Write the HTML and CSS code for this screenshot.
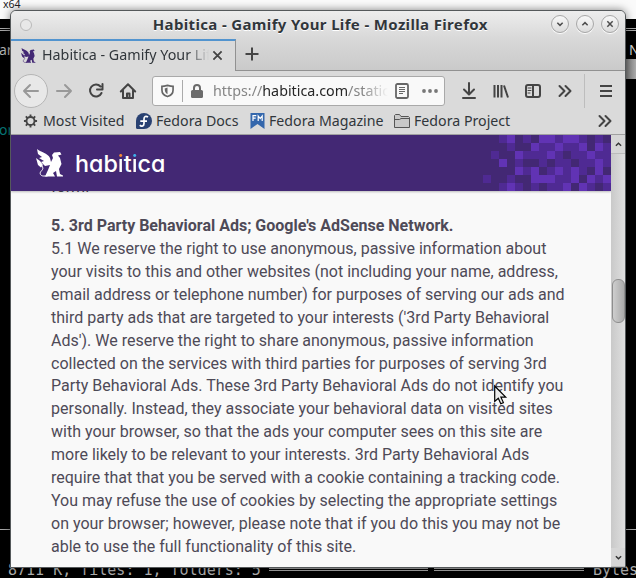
FILE: index.html
```
<!DOCTYPE html>
<html lang="en">
<head>
<meta charset="utf-8">
<title>Habitica - Gamify Your Life</title>
<link rel="stylesheet" href="styles.css">
</head>
<body>
<div class="desktop">
  <div class="host">x64</div>
  <div class="terminal">
    <span class="term t-name">ar</span><span class="term t-n">N</span><span class="term t-or">or</span>
    <i class="rule r-top"></i><i class="rule r-mid"></i><i class="rule r-bot-a"></i><i class="rule r-bot-b"></i>
    <i class="side"></i>
    <span class="term t-files">8711 K, files: 1, folders: 5</span><span class="term t-bytes">Bytes</span>
  </div>
  <main class="window">
    <header class="titlebar">
      <i class="dot"></i>
      <h1>Habitica - Gamify Your Life - Mozilla Firefox</h1>
      <div class="controls">
        <button><svg viewBox="0 0 18 18"><path d="M6 7.5l3 3 3-3"/></svg></button>
        <button><svg viewBox="0 0 18 18"><path d="M6 10.5l3-3 3 3"/></svg></button>
        <button><svg viewBox="0 0 18 18"><path d="M6 6l6 6M12 6l-6 6"/></svg></button>
      </div>
    </header>
    <div class="tabs">
      <div class="tab">
        <svg class="favicon" viewBox="0 0 28 28"><use href="#gryphon"/></svg>
        <span class="tabtitle">Habitica - Gamify Your Life</span>
        <svg class="close" viewBox="0 0 12 12"><path d="M1.5 1.5l9 9M10.500 1.500l-9 9"/></svg>
      </div>
      <svg class="plus" viewBox="0 0 14 14"><path d="M7 .5v13M.5 7h13"/></svg>
    </div>
    <nav class="toolbar">
      <span class="back"><svg class="ic" viewBox="0 0 16 16"><path d="M15 8H1M7 2L1 8l6 6"/></svg></span>
      <svg class="ic fwd" viewBox="0 0 16 16"><path d="M1 8h14M9 2l6 6-6 6"/></svg>
      <svg class="ic reload" viewBox="0 0 16 16"><path d="M12.500 3.500A6 6 0 1 0 13.500 10M14.500 1v5.500H9"/></svg>
      <svg class="ic home" viewBox="0 0 16 16"><path d="M.8 8.500L8 1.300l7.200 7.200M3 7.500V15h10V7.500M7 15v-4.500h2.500V15"/></svg>
      <div class="url">
        <svg class="shield" viewBox="0 0 14 14"><path d="M7 1C5 1.500 3 2 1 2v4c0 4 2.500 6 6 7 3.500-1 6-3 6-7V2C11 2 9 1.500 7 1z"/><path class="fill" d="M7 3.300L4 4.300c0 3 .8 5 3 6.200z"/></svg>
        <i class="split"></i>
        <svg class="lock" viewBox="0 0 12 14"><rect y="6" width="12" height="8" rx="1.500"/><path d="M3 7V4a3 3 0 0 1 6 0v3"/></svg>
        <span class="address">https://<b>habitica.com</b>/static/terms</span>
        <svg class="reader" viewBox="0 0 14 16"><rect x="1" y="1" width="12" height="14" rx="1.500"/><path d="M4 4.500h6M4 6.500h6M4 8.500h6M4 10.500h4"/></svg>
        <svg class="dots" viewBox="0 0 16 4"><circle cx="2" cy="2" r="1.900"/><circle cx="8" cy="2" r="1.900"/><circle cx="14" cy="2" r="1.900"/></svg>
      </div>
      <svg class="ic down" viewBox="0 0 16 16"><path d="M8 0v11M3 6.500l5 5 5-5M2 15h12"/></svg>
      <svg class="ic library" viewBox="0 0 16 16"><path d="M1.500 2v12.500M5 2v12.500M8.500 2v12.500M11 2.500l4 12"/></svg>
      <svg class="ic sidebar" viewBox="0 0 16 16"><rect x="1" y="2" width="14" height="12" rx="2"/><path d="M8 2v12"/><path class="thin" d="M3 5h3M3 7.500h3M3 10h2"/></svg>
      <svg class="ic more" viewBox="0 0 16 16"><path d="M2.500 3L7.500 8l-5 5M8.500 3l5 5-5 5"/></svg>
      <i class="vline"></i>
      <svg class="ic menu" viewBox="0 0 16 16"><path d="M2 3h12M2 8h12M2 13h12"/></svg>
    </nav>
    <div class="bookmarks">
      <svg class="bi gear" viewBox="0 0 16 16"><circle cx="8" cy="8" r="4.300"/><path d="M8 1v3M8 12v3M1 8h3M12 8h3M3 3l2.200 2.200M10.800 10.800L13 13M13 3l-2.200 2.200M5.200 10.800L3 13"/></svg>
      <span class="b1">Most Visited</span>
      <svg class="bi fedora" viewBox="0 0 16 16"><path fill="#294172" d="M0 8a8 8 0 1 1 8 8H1.500A1.500 1.500 0 0 1 0 14.500z"/><path fill="none" stroke="#fff" stroke-width="1.700" d="M12 4.200C10 2.500 8 3.500 8 6v4.500c0 2.500-2.500 3.500-4.200 1.700M4.300 8.200H11"/></svg>
      <span class="b2">Fedora Docs</span>
      <svg class="bi fm" viewBox="0 0 14 16"><path fill="#3467ac" d="M0 0h14v16l-7-5-7 5z"/><path fill="none" stroke="#fff" stroke-width="1.200" d="M2.500 8V2.600h3.300M2.500 5.200h2.700M7.700 8V3l2 2.500 2-2.500v5"/></svg>
      <span class="b3">Fedora Magazine</span>
      <svg class="bi folder" viewBox="0 0 16 16"><path d="M.5 14.500V2.500l1-1h4l1.500 2h7.500l1 1v10zM.5 6.500h5l1.500-1h8.500"/></svg>
      <span class="b4">Fedora Project</span>
      <svg class="ic bmore" viewBox="0 0 16 16"><path d="M2.500 3L7.500 8l-5 5M8.500 3l5 5-5 5"/></svg>
    </div>
    <section class="view">
      <div class="page">
        <div class="brandbar">
          <svg class="logo" viewBox="0 0 28 28"><g id="gryphon"><path d="M1 0C4 3 12 4 14 9l1 4 2-4-1-3 2-2.500 6-.5 1.500 2.500-3.500 1L24 9l1.500 6-2.500 5 1 5 3 1.500v1h-6L20 22l-3 2 2 3.500H9l3-6.500 2-5-5 1-4-4 3-1-5-3 3-1-4-3z"/><path d="M0 9l4 3 3 4-2 2.500L2 16z"/><path fill="none" stroke="currentColor" stroke-width="1" d="M6 17c2 3 0 4-1.500 6-1 2 .5 4 3 4h4"/></g></svg>
          <div class="word">hab<span class="io">i</span>t<span class="ib">i</span>ca</div>
          <svg class="pixels" viewBox="0 0 16 7" shape-rendering="crispEdges">
            <path fill="#4f2a93" d="M2 0h1v1h-1zM5 0h1v1h-1zM9 0h1v1h-1zM12 0h1v1h-1zM14 0h1v1h-1zM3 1h1v1h-1zM7 1h2v1h-2zM10 1h2v1h-2zM15 1h1v1h-1zM1 2h1v1h-1zM5 2h3v1h-3zM9 2h1v1h-1zM11 2h2v1h-2zM14 2h2v1h-2zM4 3h1v1h-1zM7 3h1v1h-1zM9 3h2v1h-2zM12 3h2v1h-2zM15 3h1v1h-1zM5 4h1v1h-1zM8 4h1v1h-1zM10 4h1v1h-1zM12 4h1v1h-1zM0 5h1v1h-1zM3 5h1v1h-1zM9 5h2v1h-2zM14 5h1v1h-1zM2 6h1v1h-1zM4 6h1v1h-1zM6 6h1v1h-1zM8 6h2v1h-2zM13 6h1v1h-1zM15 6h1v1h-1z"/>
            <path fill="#6133b4" d="M3 0h1v1h-1zM7 0h2v1h-2zM10 0h2v1h-2zM6 1h1v1h-1zM9 1h1v1h-1zM12 1h1v1h-1zM14 1h1v1h-1zM4 2h1v1h-1zM8 2h1v1h-1zM13 2h1v1h-1zM2 3h1v1h-1zM14 3h1v1h-1zM4 4h1v1h-1zM6 4h1v1h-1zM9 4h1v1h-1zM11 4h1v1h-1zM14 4h1v1h-1zM6 5h3v1h-3zM11 5h1v1h-1zM13 5h1v1h-1zM15 5h1v1h-1zM3 6h1v1h-1zM10 6h1v1h-1zM12 6h1v1h-1z"/>
          </svg>
        </div>
        <article>
          <p class="prev">form.</p>
          <p><strong>5. 3rd Party Behavioral Ads; Google's AdSense Network.</strong><br>
          5.1 We reserve the right to use anonymous, passive information about<br>
          your visits to this and other websites (not including your name, address,<br>
          email address or telephone number) for purposes of serving our ads and<br>
          third party ads that are targeted to your interests ('3rd Party Behavioral<br>
          Ads'). We reserve the right to share anonymous, passive information<br>
          collected on the services with third parties for purposes of serving 3rd<br>
          Party Behavioral Ads. These 3rd Party Behavioral Ads do not identify you<br>
          personally. Instead, they associate your behavioral data on visited sites<br>
          with your browser, so that the ads your computer sees on this site are<br>
          more likely to be relevant to your interests. 3rd Party Behavioral Ads<br>
          require that that you be served with a cookie containing a tracking code.<br>
          You may refuse the use of cookies by selecting the appropriate settings<br>
          on your browser; however, please note that if you do this you may not be<br>
          able to use the full functionality of this site.</p>
        </article>
      </div>
      <div class="scrollbar">
        <span class="sb"><svg viewBox="0 0 8 5"><path d="M1 4l3-3 3 3"/></svg></span>
        <span class="track"><i class="thumb"></i></span>
        <span class="sb"><svg viewBox="0 0 8 5"><path d="M1 1l3 3 3-3"/></svg></span>
      </div>
    </section>
  </main>
  <svg class="cursor" viewBox="0 0 13 20"><path d="M.7 1v15.500l3.600-3.300 2.500 5.600 2.600-1.200-2.500-5.400h4.800z"/></svg>
</div>
</body>
</html>
```
FILE: styles.css
```
* { box-sizing: border-box; }
body { margin: 0; }
svg { display: block; flex: none; overflow: visible; }
i { display: block; flex: none; }
.desktop { position: relative; width: 636px; height: 578px; overflow: hidden; background: #fafafa; font-family: "Noto Sans", sans-serif; color: #31363b; }
.host { position: absolute; left: 3px; top: -3px; font-size: 10.5px; line-height: 15px; color: #222; }
.terminal { position: absolute; inset: 19px 0 0; background: #000; }
.term { position: absolute; font: 16px/20px "DejaVu Sans Mono", monospace; color: #b2b2b2; white-space: pre; }
.t-name { left: -1px; top: 21px; font: 14px/20px "Noto Sans", sans-serif; }
.t-n { left: 629px; top: 21px; font: 14px/20px "Noto Sans", sans-serif; color: #d0d0d0; }
.t-or { left: -1px; top: 101px; font: 14px/20px "Noto Sans", sans-serif; color: #087878; }
.t-files { left: 8px; top: 541px; font-size: 15px; }
.t-bytes { left: 593px; top: 541px; font-size: 15px; }
.rule { position: absolute; height: 3px; border: solid #a8a8a8; border-width: 1px 0; }
.r-top { left: 0; right: 0; top: 9px; }
.r-mid { left: 0; right: 0; top: 510px; height: 1px; border-width: 1px 0 0; }
.r-bot-a { left: 269px; width: 159px; top: 549px; }
.r-bot-b { left: 434px; width: 150px; top: 549px; }
.side { position: absolute; right: 0; top: 40px; width: 11px; height: 20px; background: linear-gradient(90deg, #777, #aaa); }
.window { position: absolute; left: 10px; top: 10px; width: 616px; height: 558px; border: 1px solid #55595b; border-radius: 6px 6px 0 0; background: #dadada; box-shadow: 0 0 9px rgba(0,0,0,.5); overflow: hidden; display: flex; flex-direction: column; }
.titlebar { height: 28px; display: flex; align-items: center; background: linear-gradient(#ededed, #d8d8d8); position: relative; padding: 0 6.5px 2px 9px; }
.titlebar h1 { margin: 0 auto; font-size: 15px; line-height: 20px; letter-spacing: .35px; padding-left: 58px; white-space: nowrap; text-shadow: 0 1px #fff; }
.dot { width: 12px; height: 12px; border-radius: 50%; border: 1px solid #b9b9b9; background: #e8e8e8; margin-top: 2px; }
.controls { display: flex; gap: 7px; }
.controls button { width: 18px; height: 18px; padding: 0; border: 1px solid #a6a6a6; border-radius: 50%; background: linear-gradient(#f8f8f8, #dcdcdc); box-shadow: 0 1px 1px #fff; }
.controls svg { width: 16px; height: 16px; fill: none; stroke: #4d4d4d; stroke-width: 1.7; }
.tabs { height: 32px; display: flex; background: linear-gradient(#d8d8d8, #cacaca); border-bottom: 1px solid #919191; }
.tab { width: 225px; height: 32px; border-top: 2px solid #5294cf; border-right: 1px solid #919191; background: #dadada; display: flex; align-items: center; padding: 0 0 2px 10px; }
.favicon { width: 15px; height: 15px; fill: #432874; color: #432874; margin-right: 6px; }
.tabtitle { width: 167px; overflow: hidden; white-space: nowrap; font-size: 14.3px; line-height: 22px; margin-top: -1px; mask-image: linear-gradient(90deg, #000 145px, transparent 167px); }
.close { width: 11px; height: 11px; stroke: #444; stroke-width: 2; margin-left: 3px; }
.plus { width: 14px; height: 14px; stroke: #444; stroke-width: 2; fill: none; margin: 8px 0 0 9px; }
.toolbar { height: 40px; display: flex; align-items: center; padding-left: 3px; }
.ic { width: 16px; height: 16px; fill: none; stroke: #444; stroke-width: 2; stroke-linecap: round; stroke-linejoin: round; }
.ic .thin { stroke-width: 1; }
.back { width: 34px; height: 34px; border: 1px solid #b5b5b5; border-radius: 50%; background: #e8e8e8; display: grid; place-items: center; flex: none; }
.back svg, .fwd { stroke: #999; }
.fwd { margin-left: 8px; }
.reload { margin-left: 16px; }
.home { margin-left: 16px; }
.url { width: 293px; height: 30px; border: 1px solid #a9a9a9; border-radius: 3px; background: #f9f9f9; margin-left: 16px; display: flex; align-items: center; flex: none; padding-left: 8px; }
.shield { width: 13px; height: 14px; fill: none; stroke: #666; stroke-width: 1.8; }
.shield .fill { fill: #666; stroke: none; }
.split { width: 1px; height: 22px; background: #aaa; margin: 0 8px; }
.lock { width: 12px; height: 14px; fill: #6b6b6b; }
.lock path { fill: none; stroke: #6b6b6b; stroke-width: 2; }
.address { margin-left: 10px; width: 175px; font-size: 14.3px; line-height: 22px; white-space: nowrap; overflow: hidden; color: #858585; mask-image: linear-gradient(90deg, #000 150px, transparent 175px); }
.address b { font-weight: 400; color: #262626; }
.reader { width: 14px; height: 16px; margin-left: 7px; fill: none; stroke: #666; stroke-width: 1.8; }
.reader path { stroke-width: 1; }
.dots { width: 16px; height: 4px; margin-left: 13px; fill: #777; }
.down { margin-left: 16px; }
.library { margin-left: 16px; stroke-linecap: butt; }
.sidebar { margin-left: 16px; }
.more { margin-left: 16px; }
.vline { width: 1px; height: 34px; background: #bdbdbd; margin-left: 11px; }
.menu { margin-left: 13px; stroke-linecap: butt; }
.bookmarks { height: 24px; display: flex; align-items: center; border-bottom: 1px solid #a0a0a0; font-size: 14.2px; line-height: 20px; white-space: nowrap; padding: 0 12px 4px 12px; }
.bookmarks span { margin-left: 5px; flex: none; }
.bi { width: 16px; height: 16px; }
.gear { fill: none; stroke: #444; stroke-width: 2; }
.gear, .fm { width: 15px; }
.b1 { width: 93px; }
.b2 { width: 94px; }
.b3 { width: 125px; }
.folder { fill: #c9c9c9; stroke: #555; }
.bookmarks .b2, .bookmarks .b3, .bookmarks .b4 { margin-left: 4px; }
.bmore { margin-left: auto; }
.view { flex: 1; display: flex; min-height: 0; }
.page { width: 600px; height: 433px; background: #f9f9f9; overflow: hidden; }
.brandbar { height: 56px; background: #432874; color: #fff; display: flex; align-items: center; padding-left: 25px; position: relative; z-index: 1; box-shadow: 0 1px 2px rgba(0,0,0,.25); }
.logo { width: 28px; height: 28px; fill: currentColor; }
.word { font: 500 23.3px/32px Inter, sans-serif; font-feature-settings: "cv11"; margin: 2px 0 0 11px; }
.io, .ib { color: transparent; -webkit-background-clip: text; background-clip: text; }
.io { background-image: linear-gradient(#f58a35 9px, #fff 9px); }
.ib { background-image: linear-gradient(#3fb0ea 9px, #fff 9px); }
.pixels { width: 128px; height: 56px; margin-left: auto; }
article { padding: 1.4px 40px 0; color: #4e4a57; font: 16px/22.88px Roboto, sans-serif; white-space: nowrap; }
article p { margin: 0; }
article .prev { margin-top: -16px; margin-bottom: 16px; }
article strong { font-weight: 700; }
.scrollbar { width: 14px; display: flex; flex-direction: column; background: linear-gradient(90deg, #c9c9c9, #dfdfdf); }
.sb { height: 19px; display: grid; place-items: center; background: #d6d6d6; border-bottom: 1px solid #bbb; }
.sb svg { width: 7px; height: 5px; fill: none; stroke: #333; stroke-width: 1.6; }
.track { flex: 1; padding-top: 125px; }
.thumb { width: 13px; height: 44px; margin-left: .5px; border: 1px solid #8e8e8e; border-radius: 6px; background: linear-gradient(90deg, #cecece, #aaa); }
.cursor { position: absolute; left: 494px; top: 385px; width: 13px; height: 20px; fill: #ececec; stroke: #000; stroke-width: 1.2; }
```
